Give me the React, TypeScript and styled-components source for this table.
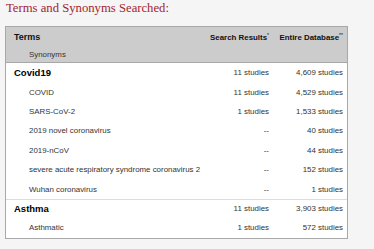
import React from 'react'
import styled, {createGlobalStyle} from 'styled-components'

const GlobalStyle = createGlobalStyle`
  body {
    margin: 0;
    background: #f5f5f5;
    font-family: "Liberation Sans", Arial, sans-serif;
  }
`

const Page = styled.div`
  padding: 1px 0 0 5px;
`

const Title = styled.h2`
  margin: 0 0 0 1px;
  font-family: "Liberation Serif", "Times New Roman", serif;
  font-weight: normal;
  font-size: 12.7px;
  line-height: 15px;
  color: #a3242f;
`

const Table = styled.div`
  margin-top: 10px;
  width: 343px;
  box-sizing: border-box;
  border: 1px solid #a8a8a8;
  background: #fff;
`

const Head = styled.div`
  height: 36px;
  box-sizing: border-box;
  background: #cccccc;
  border-bottom: 1px solid #a8a8a8;
  padding-top: 3px;
`

const Grid = styled.div`
  display: grid;
  grid-template-columns: minmax(0, 1fr) 80px 74px;
  align-items: center;
  padding-right: 4px;
`

const HeadRow = styled(Grid)`
  height: 14px;
`

const HeadTerm = styled.div`
  padding-left: 8px;
  font-size: 9px;
  font-weight: bold;
  color: #111;
`

const HeadCol = styled.div`
  text-align: right;
  font-size: 7.9px;
  font-weight: bold;
  color: #111;
  white-space: nowrap;

  sup {
    font-size: 5px;
    font-weight: normal;
    vertical-align: 3px;
  }
`

const HeadSyn = styled.div`
  padding: 6px 0 0 23px;
  font-size: 7.9px;
  line-height: 9px;
  color: #333;
`

const Row = styled(Grid)<{divided?: boolean}>`
  height: 19.4px;
  box-sizing: border-box;
  border-top: ${(p) => (p.divided ? '1px solid #dcdcdc' : 'none')};
`

const Term = styled.div<{group?: boolean}>`
  padding-left: ${(p) => (p.group ? '8px' : '23px')};
  font-size: ${(p) => (p.group ? '9.5px' : '7.9px')};
  font-weight: ${(p) => (p.group ? 'bold' : 'normal')};
  color: ${(p) => (p.group ? '#000' : '#333')};
  white-space: nowrap;
`

const Cell = styled.div`
  text-align: right;
  font-size: 7.9px;
  color: #333;
  white-space: nowrap;
`

type Item = {term: string; search: string; total: string; group?: boolean}

const rows: Item[] = [
  {term: 'Covid19', search: '11 studies', total: '4,609 studies', group: true},
  {term: 'COVID', search: '11 studies', total: '4,529 studies'},
  {term: 'SARS-CoV-2', search: '1 studies', total: '1,533 studies'},
  {term: '2019 novel coronavirus', search: '--', total: '40 studies'},
  {term: '2019-nCoV', search: '--', total: '44 studies'},
  {term: 'severe acute respiratory syndrome coronavirus 2', search: '--', total: '152 studies'},
  {term: 'Wuhan coronavirus', search: '--', total: '1 studies'},
  {term: 'Asthma', search: '11 studies', total: '3,903 studies', group: true},
  {term: 'Asthmatic', search: '1 studies', total: '572 studies'},
]

export default function App() {
  return (
    <>
      <GlobalStyle />
      <Page>
        <Title>Terms and Synonyms Searched:</Title>
        <Table>
          <Head>
            <HeadRow>
              <HeadTerm>Terms</HeadTerm>
              <HeadCol>
                Search Results<sup>*</sup>
              </HeadCol>
              <HeadCol>
                Entire Database<sup>**</sup>
              </HeadCol>
            </HeadRow>
            <HeadSyn>Synonyms</HeadSyn>
          </Head>
          {rows.map((r, i) => (
            <Row key={r.term} divided={r.group && i > 0}>
              <Term group={r.group}>{r.term}</Term>
              <Cell>{r.search}</Cell>
              <Cell>{r.total}</Cell>
            </Row>
          ))}
        </Table>
      </Page>
    </>
  )
}
